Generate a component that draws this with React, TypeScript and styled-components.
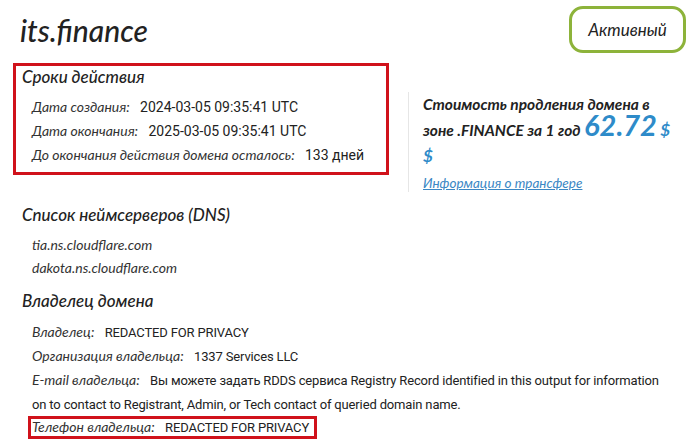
import * as React from 'react';
import styled, { createGlobalStyle } from 'styled-components';

const GlobalStyle = createGlobalStyle`
    html, body {
        margin: 0;
        padding: 0;
        background: #fff;
    }
    body {
        font-family: Lato, "Open Sans", sans-serif;
        color: #222;
    }
`;

const Page = styled.div`
    width: 693px;
    height: 439px;
    box-sizing: border-box;
    padding: 6px 7px 0 13px;
    overflow: hidden;
`;

const Header = styled.header`
    display: flex;
    justify-content: space-between;
    align-items: center;
    height: 47px;
`;

const Title = styled.h1`
    margin: 0 0 0 7px;
    font-style: italic;
    font-weight: 500;
    font-size: 30px;
    color: #222;
`;

const Badge = styled.div`
    box-sizing: border-box;
    width: 117px;
    height: 47px;
    border: 3px solid #8db33a;
    border-radius: 14px;
    display: flex;
    align-items: center;
    justify-content: center;
    font-style: italic;
    font-size: 17px;
    color: #222;
`;

const TopRow = styled.div`
    display: flex;
    align-items: flex-start;
    margin-top: 10px;
`;

const Box = styled.section`
    box-sizing: border-box;
    width: 376px;
    border: 3px solid #d0121b;
    padding: 0 6px 5px 6px;
`;

const Heading = styled.h2`
    margin: 0;
    font-style: italic;
    font-weight: 500;
    font-size: 17px;
    line-height: 22px;
    color: #222;
`;

const List = styled.div<{ $rowHeight: number; $top: number }>`
    margin-top: ${p => p.$top}px;
    padding-left: 10px;
    max-width: 628px;
    font-size: 13px;
    line-height: ${p => p.$rowHeight}px;
`;

const Row = styled.div``;

const Label = styled.span`
    font-style: italic;
    font-size: 14px;
    color: #333;
    margin-right: 7px;
`;

const Value = styled.span<{ $narrow?: boolean }>`
    font-family: Roboto, "Liberation Sans", sans-serif;
    font-size: ${p => (p.$narrow ? 13 : 14)}px;
    letter-spacing: ${p => (p.$narrow ? '-0.15px' : '0')};
    color: #222;
`;

const Boxed = styled.div`
    width: fit-content;
    border: 3px solid #d0121b;
    padding: 0 5px 0 1px;
    margin-left: -4px;
    line-height: 16px;
`;

const Side = styled.aside`
    margin: 29px 0 0 19px;
    border-left: 1px solid #e6e6e6;
    padding-left: 14px;
    height: 100px;
`;

const PriceText = styled.p`
    margin: -1.5px 0 0 0;
    font-style: italic;
    font-weight: 700;
    font-size: 15.5px;
    line-height: 26px;
    color: #222;
    width: 252px;
`;

const Price = styled.span<{ $size: number }>`
    font-size: ${p => p.$size}px;
    line-height: 0;
    font-weight: 700;
    color: #2e8bc9;
`;

const TransferLink = styled.a`
    display: block;
    margin-top: 3px;
    font-style: italic;
    font-size: 13.5px;
    line-height: 22px;
    color: #3b87c4;
    text-decoration: underline;
`;

const Section = styled.section<{ $top: number }>`
    margin-top: ${p => p.$top}px;
    padding-left: 9px;
`;

const Server = styled.div`
    font-style: italic;
    font-size: 14px;
    color: #333;
`;

export default function App() {
    return (
        <>
            <GlobalStyle />
            <Page>
                <Header>
                    <Title>its.finance</Title>
                    <Badge>Активный</Badge>
                </Header>
                <TopRow>
                    <Box>
                        <Heading>Сроки действия</Heading>
                        <List $rowHeight={24} $top={7}>
                            <Row><Label>Дата создания:</Label> <Value>2024-03-05 09:35:41 UTC</Value></Row>
                            <Row><Label>Дата окончания:</Label> <Value>2025-03-05 09:35:41 UTC</Value></Row>
                            <Row><Label>До окончания действия домена осталось:</Label> <Value>133 дней</Value></Row>
                        </List>
                    </Box>
                    <Side>
                        <PriceText>
                            Стоимость продления домена в зоне .FINANCE за 1 год{' '}
                            <Price $size={29}>62.72</Price> <Price $size={17}>$</Price>{' '}
                            <Price $size={17}>$</Price>
                        </PriceText>
                        <TransferLink href="#">Информация о трансфере</TransferLink>
                    </Side>
                </TopRow>
                <Section $top={12}>
                    <Heading>Список неймсерверов (DNS)</Heading>
                    <List $rowHeight={23} $top={6.5}>
                        <Server>tia.ns.cloudflare.com</Server>
                        <Server>dakota.ns.cloudflare.com</Server>
                    </List>
                </Section>
                <Section $top={11.5}>
                    <Heading>Владелец домена</Heading>
                    <List $rowHeight={23.2} $top={8}>
                        <Row><Label>Владелец:</Label> <Value $narrow>REDACTED FOR PRIVACY</Value></Row>
                        <Row><Label>Организация владельца:</Label> <Value $narrow>1337 Services LLC</Value></Row>
                        <Row>
                            <Label>E-mail владельца:</Label>{' '}
                            <Value $narrow>Вы можете задать RDDS сервиса Registry Record identified in this output for information on to contact to Registrant, Admin, or Tech contact of queried domain name.</Value>
                        </Row>
                        <Boxed><Label>Телефон владельца:</Label> <Value $narrow>REDACTED FOR PRIVACY</Value></Boxed>
                    </List>
                </Section>
            </Page>
        </>
    );
}
